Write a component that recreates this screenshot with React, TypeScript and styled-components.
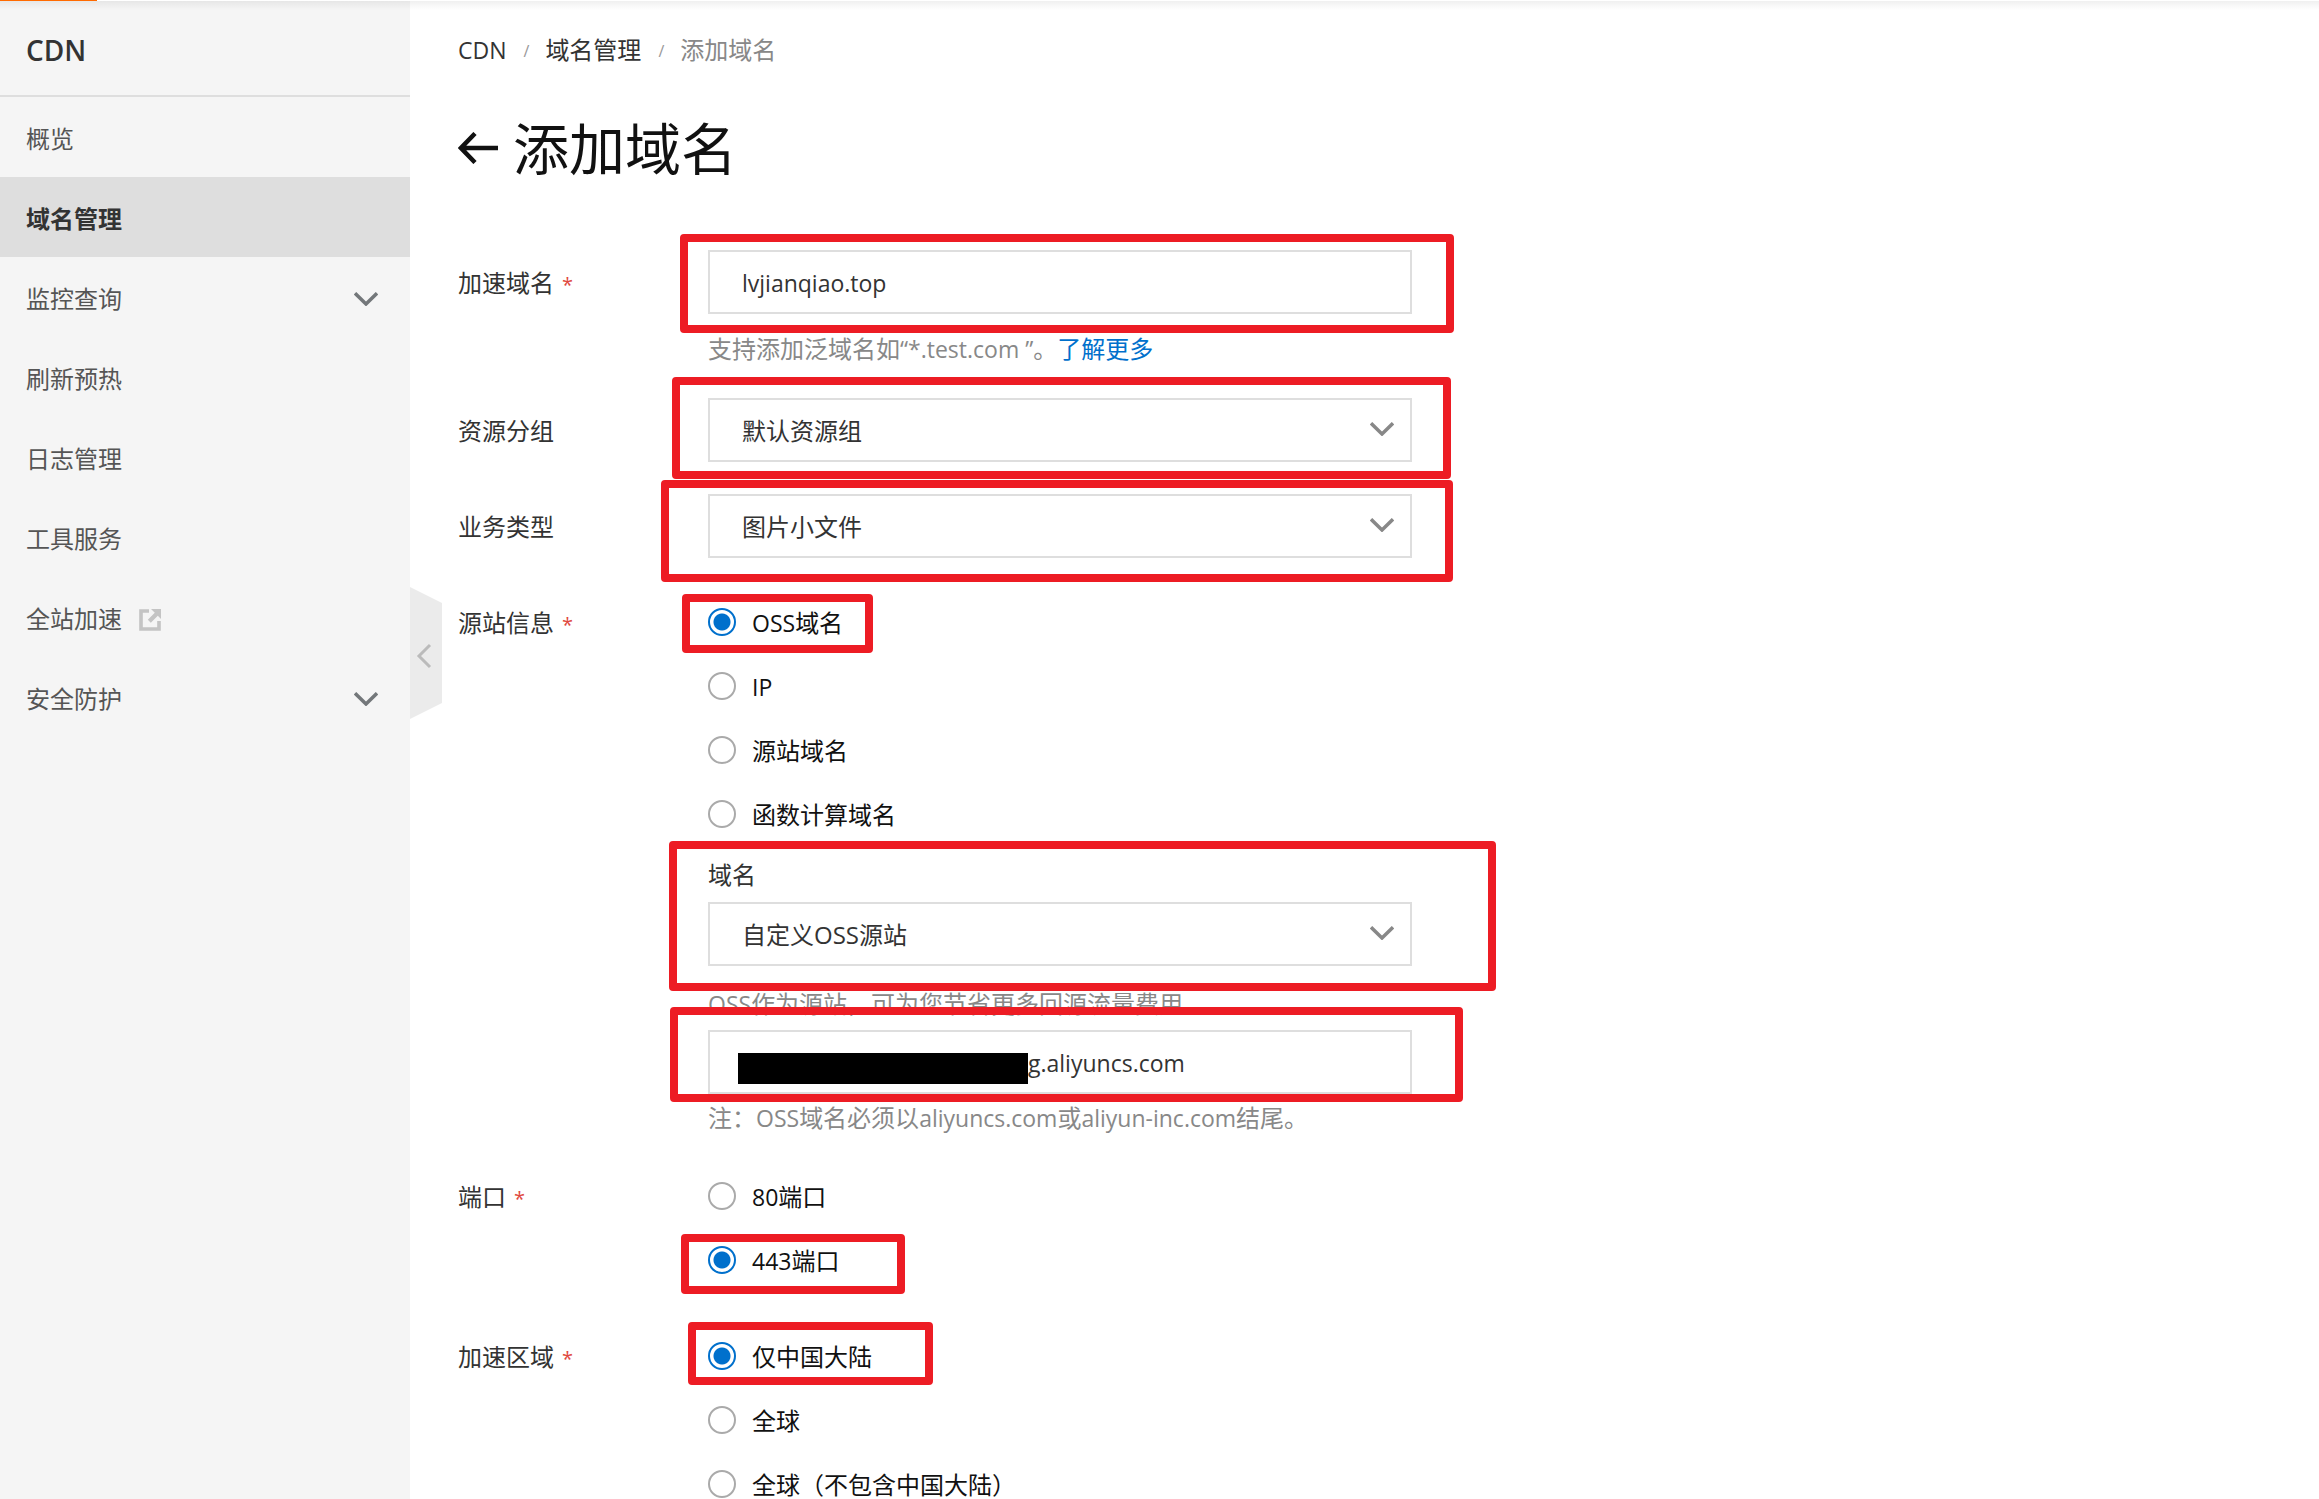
import React from "react";
import styled, { createGlobalStyle } from "styled-components";

const GlobalStyle = createGlobalStyle`
  *, *::before, *::after { box-sizing: border-box; }
  body {
    margin: 0;
    background: #fff;
    color: #333;
    font-family: "Open Sans", "Noto Sans CJK SC", sans-serif;
    font-size: 24px;
    line-height: 36px;
  }
  button, input, select { font: inherit; color: inherit; }
`;

const Page = styled.div`
  position: relative;
  display: flex;
  height: 100vh;
  overflow: hidden;
`;

const TopShadow = styled.div`
  position: absolute;
  inset: 0 0 auto 0;
  height: 10px;
  border-top: 1px solid #fff;
  background: linear-gradient(rgba(0, 0, 0, 0.06), rgba(0, 0, 0, 0));
  background-clip: padding-box;
  pointer-events: none;
`;

const Progress = styled.div`
  position: absolute;
  top: 0;
  left: 0;
  width: 97px;
  height: 1px;
  background: #ff6a00;
`;

const Sidebar = styled.nav`
  position: relative;
  flex: 0 0 410px;
  background: #f5f5f5;
`;

const Product = styled.div`
  height: 97px;
  padding: 32px 26px 0;
  border-bottom: 2px solid #dedede;
  font-size: 28px;
  font-weight: 600;
`;

const Menu = styled.ul`
  margin: 0;
  padding: 0;
  list-style: none;
`;

const MenuLink = styled.a<{ $active?: boolean }>`
  display: flex;
  align-items: center;
  gap: 16px;
  height: 80px;
  padding: 4px 32px 0 26px;
  color: ${(p) => (p.$active ? "#333" : "#555")};
  background: ${(p) => (p.$active ? "#dedede" : "transparent")};
  font-weight: ${(p) => (p.$active ? 700 : 400)};
  text-decoration: none;

  svg { flex: none; }
`;

const Spacer = styled.span`
  flex: 1;
`;

const Handle = styled.button`
  position: absolute;
  top: 587px;
  left: 100%;
  display: flex;
  align-items: center;
  width: 32px;
  height: 132px;
  padding: 6px 0 0 6px;
  border: 0;
  background: #ebebeb;
  clip-path: polygon(0 0, 100% 16px, 100% 116px, 0 100%);
`;

const Main = styled.main`
  flex: 1;
  min-width: 0;
  padding: 32px 48px 0;
`;

const Crumbs = styled.ol`
  display: flex;
  gap: 17px;
  margin: 0;
  padding: 0;
  list-style: none;
  color: #888;

  a { color: #333; text-decoration: none; }
  li + li::before {
    content: "/";
    margin-right: 16px;
    color: #999;
    font-size: 16px;
    vertical-align: 2px;
  }
`;

const TitleBar = styled.header`
  display: flex;
  align-items: center;
  gap: 14px;
  height: 84px;
  margin: 37px 0 60px;
`;

const Back = styled.button`
  display: flex;
  padding: 0;
  border: 0;
  background: none;
`;

const Title = styled.h1`
  margin: 0;
  color: #111;
  font-size: 56px;
  font-weight: 400;
  line-height: 84px;
`;

const Form = styled.form`
  display: flex;
  flex-direction: column;
  gap: 32px;
`;

const Row = styled.div`
  display: grid;
  grid-template-columns: 250px minmax(0, 704px);
`;

const RowLabel = styled.label`
  padding-top: 15px;
`;

const Star = styled.span`
  margin-left: 8px;
  color: #e0483e;
  font-size: 20px;
`;

const Latin = styled.span`
  font-size: 23px;
`;

const Control = styled.div`
  position: relative;
`;

const TextBox = styled.input<{ $indent?: number }>`
  display: block;
  width: 100%;
  height: 64px;
  padding: 2px 32px 0 ${(p) => p.$indent ?? 32}px;
  border: 2px solid #dedede;
  border-radius: 0;
  outline: 0;
  background: #fff;
  font-size: 23px;
`;

const SelectBox = styled.select`
  display: block;
  width: 100%;
  height: 64px;
  padding: 2px 80px 0 32px;
  border: 2px solid #dedede;
  border-radius: 0;
  background: #fff;
  appearance: none;
`;

const SelectArrow = styled.span`
  position: absolute;
  top: 24px;
  right: 18px;
  display: flex;
  pointer-events: none;
`;

const hintMargins = {
  link: "21px 0 3px",
  note: "24px 0 0",
  compact: "10px 0 0",
};

const Hint = styled.p<{ $kind: keyof typeof hintMargins }>`
  margin: ${(p) => hintMargins[p.$kind]};
  color: #888;
  line-height: 28px;

  a { color: #0070cc; text-decoration: none; }
`;

const SubLabel = styled.label`
  display: block;
  height: 56px;
  padding-top: 11px;
`;

const SecondControl = styled(Control)`
  margin-top: 12px;
`;

const RadioLine = styled.label`
  position: relative;
  display: flex;
  align-items: center;
  gap: 16px;
  height: 64px;
  color: #111;
`;

const RadioInput = styled.input`
  flex: none;
  width: 28px;
  height: 28px;
  margin: 0;
  border: 2px solid #aaa;
  border-radius: 50%;
  background: #fff;
  appearance: none;

  &:checked {
    border-color: #0070cc;
    background: radial-gradient(circle, #0070cc 8px, #fff 9px);
  }
`;

const RadioText = styled.span`
  padding-top: 2px;
  line-height: 28px;
`;

type Box = { x: number; y: number; w: number; h: number };

const Mark = styled.span<{ $box: Box }>`
  position: absolute;
  z-index: 1;
  top: ${(p) => p.$box.y}px;
  left: ${(p) => p.$box.x}px;
  width: ${(p) => p.$box.w}px;
  height: ${(p) => p.$box.h}px;
  border: 8px solid #ed1c24;
  border-radius: 4px;
  pointer-events: none;
`;

const Redaction = styled.span`
  position: absolute;
  top: 23px;
  left: 30px;
  width: 290px;
  height: 31px;
  background: #000;
`;

const Chevron = ({ color }: { color: string }) => (
  <svg width="24" height="14" viewBox="0 0 24 14" fill="none" aria-hidden="true">
    <path d="M1 1.200 12 12 23 1.200" stroke={color} strokeWidth="3.500" />
  </svg>
);

const External = () => (
  <svg width="24" height="26" viewBox="0 0 24 26" fill="none" aria-hidden="true">
    <path d="M11 5H3v18h18v-8" stroke="#c4c4c4" strokeWidth="3.600" />
    <path d="M13 3h10v10l-3.200-3.200-7 7-3-3 7-7z" fill="#c4c4c4" />
  </svg>
);

const Required = () => <Star aria-hidden="true">*</Star>;

const menu = [
  { text: "概览" },
  { text: "域名管理", active: true },
  { text: "监控查询", expandable: true },
  { text: "刷新预热" },
  { text: "日志管理" },
  { text: "工具服务" },
  { text: "全站加速", external: true },
  { text: "安全防护", expandable: true },
];

type RadioProps = {
  name: string;
  checked?: boolean;
  mark?: Box;
  children: React.ReactNode;
};

const Radio = ({ name, checked, mark, children }: RadioProps) => (
  <RadioLine>
    <RadioInput type="radio" name={name} defaultChecked={checked} />
    <RadioText>{children}</RadioText>
    {mark && <Mark $box={mark} />}
  </RadioLine>
);

type DropdownProps = { id: string; value: string; mark: Box };

const Dropdown = ({ id, value, mark }: DropdownProps) => (
  <Control>
    <SelectBox id={id} defaultValue={value}>
      <option>{value}</option>
    </SelectBox>
    <SelectArrow>
      <Chevron color="#888" />
    </SelectArrow>
    <Mark $box={mark} />
  </Control>
);

export default function App() {
  return (
    <Page>
      <GlobalStyle />
      <Sidebar>
        <Product>CDN</Product>
        <Menu>
          {menu.map((item) => (
            <li key={item.text}>
              <MenuLink href="#" $active={item.active}>
                {item.text}
                {item.external && <External />}
                {item.expandable && (
                  <>
                    <Spacer />
                    <Chevron color="#73777a" />
                  </>
                )}
              </MenuLink>
            </li>
          ))}
        </Menu>
        <Handle type="button" aria-label="收起">
          <svg width="16" height="26" viewBox="0 0 16 26" fill="none" aria-hidden="true">
            <path d="M14 2 3 13l11 11" stroke="#bbb" strokeWidth="3" />
          </svg>
        </Handle>
      </Sidebar>

      <Main>
        <Crumbs>
          <li><a href="#"><Latin>CDN</Latin></a></li>
          <li><a href="#">域名管理</a></li>
          <li>添加域名</li>
        </Crumbs>
        <TitleBar>
          <Back type="button" aria-label="返回">
            <svg width="41" height="32" viewBox="0 0 41 32" fill="none" aria-hidden="true">
              <path d="M17 1.500 3 16l14 14.500M3 16h37" stroke="#111" strokeWidth="4.500" />
            </svg>
          </Back>
          <Title>添加域名</Title>
        </TitleBar>

        <Form>
          <Row>
            <RowLabel htmlFor="domain">加速域名<Required /></RowLabel>
            <div>
              <Control>
                <TextBox id="domain" defaultValue="lvjianqiao.top" />
                <Mark $box={{ x: -28, y: -16, w: 774, h: 99 }} />
              </Control>
              <Hint $kind="link">
                支持添加泛域名如<Latin>“*.test.com ”</Latin>。<a href="#">了解更多</a>
              </Hint>
            </div>
          </Row>
          <Row>
            <RowLabel htmlFor="group">资源分组</RowLabel>
            <Dropdown id="group" value="默认资源组" mark={{ x: -36, y: -21, w: 779, h: 102 }} />
          </Row>
          <Row>
            <RowLabel htmlFor="business">业务类型</RowLabel>
            <Dropdown id="business" value="图片小文件" mark={{ x: -47, y: -14, w: 792, h: 102 }} />
          </Row>
          <Row>
            <RowLabel as="div" id="origin-label">源站信息<Required /></RowLabel>
            <div role="group" aria-labelledby="origin-label">
              <Radio name="origin" checked mark={{ x: -26, y: 4, w: 191, h: 59 }}>
                <Latin>OSS</Latin>域名
              </Radio>
              <Radio name="origin"><Latin>IP</Latin></Radio>
              <Radio name="origin">源站域名</Radio>
              <Radio name="origin">函数计算域名</Radio>
              <SubLabel htmlFor="oss">域名</SubLabel>
              <Dropdown id="oss" value="自定义OSS源站" mark={{ x: -39, y: -61, w: 827, h: 150 }} />
              <Hint $kind="note"><Latin>OSS</Latin>作为源站，可为您节省更多回源流量费用</Hint>
              <SecondControl>
                <TextBox aria-label="OSS域名" defaultValue="g.aliyuncs.com" $indent={318} />
                <Redaction />
                <Mark $box={{ x: -38, y: -23, w: 793, h: 95 }} />
              </SecondControl>
              <Hint $kind="compact">
                注：<Latin>OSS</Latin>域名必须以<Latin>aliyuncs.com</Latin>或
                <Latin>aliyun-inc.com</Latin>结尾。
              </Hint>
            </div>
          </Row>
          <Row>
            <RowLabel as="div" id="port-label">端口<Required /></RowLabel>
            <div role="group" aria-labelledby="port-label">
              <Radio name="port"><Latin>80</Latin>端口</Radio>
              <Radio name="port" checked mark={{ x: -27, y: 6, w: 224, h: 60 }}>
                <Latin>443</Latin>端口
              </Radio>
            </div>
          </Row>
          <Row>
            <RowLabel as="div" id="region-label">加速区域<Required /></RowLabel>
            <div role="group" aria-labelledby="region-label">
              <Radio name="region" checked mark={{ x: -20, y: -2, w: 245, h: 63 }}>
                仅中国大陆
              </Radio>
              <Radio name="region">全球</Radio>
              <Radio name="region">全球（不包含中国大陆）</Radio>
            </div>
          </Row>
        </Form>
      </Main>
      <TopShadow />
      <Progress />
    </Page>
  );
}
